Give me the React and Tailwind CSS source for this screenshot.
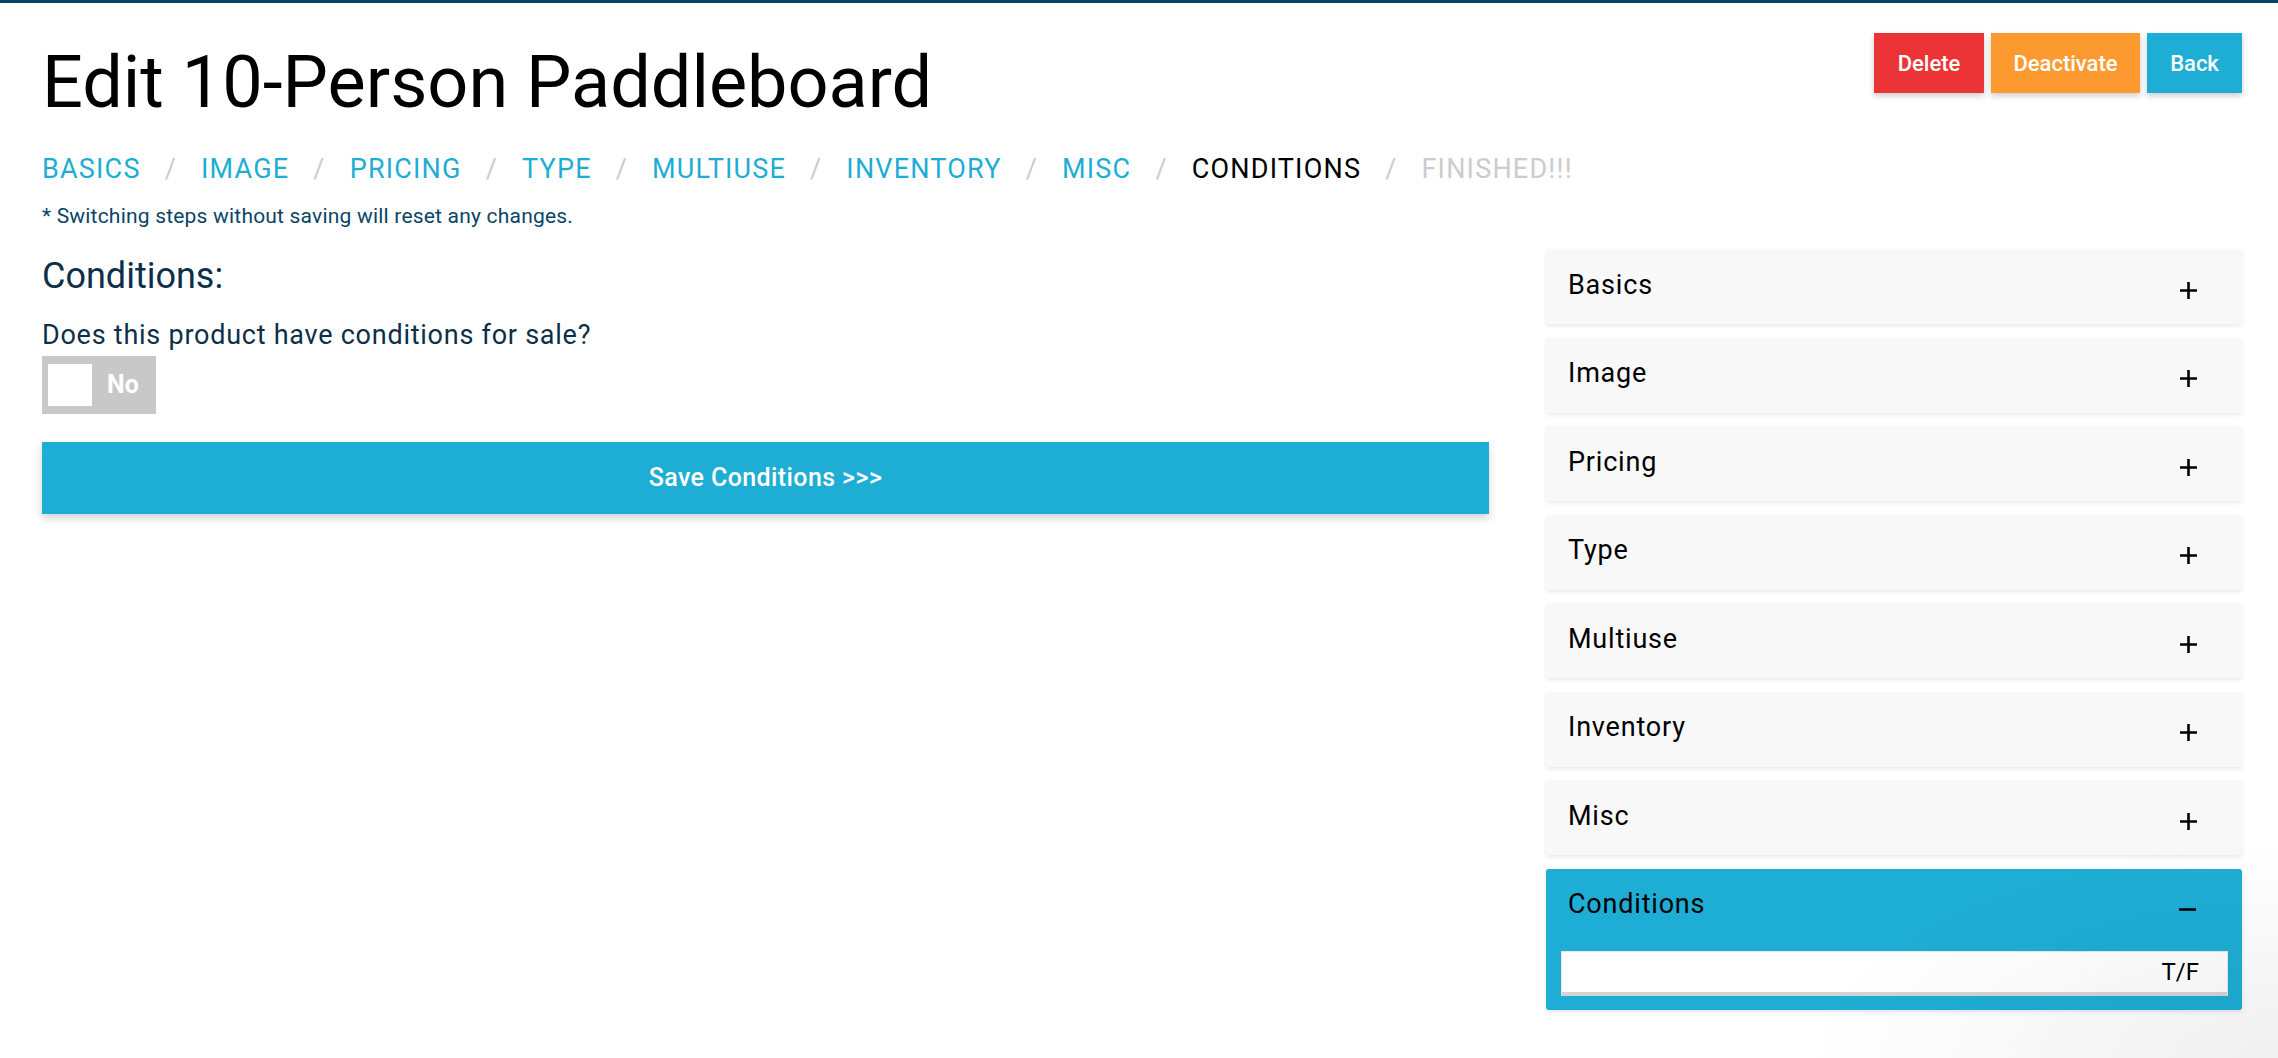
import React from 'react';

const steps = [
  { label: 'BASICS', state: 'link' },
  { label: 'IMAGE', state: 'link' },
  { label: 'PRICING', state: 'link' },
  { label: 'TYPE', state: 'link' },
  { label: 'MULTIUSE', state: 'link' },
  { label: 'INVENTORY', state: 'link' },
  { label: 'MISC', state: 'link' },
  { label: 'CONDITIONS', state: 'current' },
  { label: 'FINISHED!!!', state: 'disabled' },
];

const panels = ['Basics', 'Image', 'Pricing', 'Type', 'Multiuse', 'Inventory', 'Misc'];

const PlusIcon = () => (
  <svg width="19" height="19" viewBox="0 0 19 19" className="mt-[7px] mr-[44px]">
    <path d="M9.5 1v17M1 9.5h17" stroke="#000" strokeWidth="2.6" />
  </svg>
);

const MinusIcon = () => (
  <svg width="19" height="19" viewBox="0 0 19 19" className="mt-[7px] mr-[45px]">
    <path d="M1 9.5h17" stroke="#000" strokeWidth="2.6" />
  </svg>
);

function StepNav() {
  return (
    <div className="mt-[37px] flex items-center text-[27px] leading-none tracking-[1.2px]">
      {steps.map((s, i) => (
        <React.Fragment key={s.label}>
          {i > 0 && <span className="px-[24px] text-[#cccccc]">/</span>}
          <span
            className={
              s.state === 'link'
                ? 'text-[#1eadd4]'
                : s.state === 'current'
                ? 'text-black'
                : 'text-[#cccccc]'
            }
          >
            {s.label}
          </span>
        </React.Fragment>
      ))}
    </div>
  );
}

function Panel({ title }) {
  return (
    <div className="flex h-[75px] items-center justify-between rounded-[3px] bg-[#f8f8f8] shadow-[0_2px_4px_rgba(0,0,0,0.09)]">
      <span className="pl-[22px] pb-[3px] text-[27px] leading-none tracking-[0.8px] text-black">{title}</span>
      <PlusIcon />
    </div>
  );
}

export default function App() {
  return (
    <div className="relative h-[1058px] overflow-hidden border-t-[3px] border-[#0b4466] bg-white pl-[42px] pr-[36px] font-['Roboto',sans-serif]">
      <div className="flex items-start justify-between">
        <h1 className="mt-[44px] text-[72px] font-normal leading-none text-black">Edit 10-Person Paddleboard</h1>
        <div className="mt-[30px] flex gap-[7px] text-[22px] font-medium text-white">
          <button className="h-[60px] w-[110px] bg-[#ec3436] shadow-[0_3px_6px_rgba(0,0,0,0.2)]">Delete</button>
          <button className="h-[60px] w-[149px] bg-[#fd9a2f] shadow-[0_3px_6px_rgba(0,0,0,0.2)]">Deactivate</button>
          <button className="h-[60px] w-[95px] bg-[#1eadd4] shadow-[0_3px_6px_rgba(0,0,0,0.2)]">Back</button>
        </div>
      </div>

      <StepNav />

      <p className="mt-[23px] text-[21px] leading-none tracking-[0.2px] text-[#0b4466]">
        * Switching steps without saving will reset any changes.
      </p>

      <div className="mt-[22px] flex items-start justify-between">
        <div className="w-[1447px]">
          <h2 className="mt-[9px] text-[36px] font-normal leading-none text-[#0c3049]">Conditions:</h2>
          <p className="mt-[28px] text-[27px] leading-none tracking-[0.75px] text-[#0c3049]">Does this product have conditions for sale?</p>
          <div className="mt-[7px] flex h-[58px] w-[114px] items-center bg-[#c8c8c8] pl-[6px]">
            <div className="h-[42px] w-[44px] bg-white" />
            <span className="ml-[15px] text-[25px] font-bold text-white">No</span>
          </div>
          <button className="mt-[28px] h-[72px] w-full bg-[#1eadd4] text-[25px] font-medium tracking-[0.4px] text-white shadow-[0_4px_8px_rgba(0,0,0,0.18)]">
            Save Conditions &gt;&gt;&gt;
          </button>
        </div>

        <div className="flex w-[696px] flex-col gap-[13.5px]">
          {panels.map((p) => (
            <Panel key={p} title={p} />
          ))}
          <div className="rounded-[3px] bg-[#1eadd4] pb-[14px] shadow-[0_2px_4px_rgba(0,0,0,0.1)]">
            <div className="flex h-[75px] items-center justify-between">
              <span className="pl-[22px] pb-[3px] text-[27px] leading-none tracking-[0.8px] text-black">Conditions</span>
              <MinusIcon />
            </div>
            <div className="mx-[15px] mt-[7px] mr-[14px] flex h-[45px] items-center justify-end border border-b-[4px] border-[#e6e6e6] border-b-[#d4d4d4] bg-white pr-[28px] text-[24px] text-black">
              T/F
            </div>
          </div>
        </div>
      </div>

      <div className="pointer-events-none absolute bottom-0 right-0 h-[220px] w-[480px] bg-[radial-gradient(ellipse_at_bottom_right,rgba(0,0,0,0.06),transparent_70%)]" />
    </div>
  );
}
